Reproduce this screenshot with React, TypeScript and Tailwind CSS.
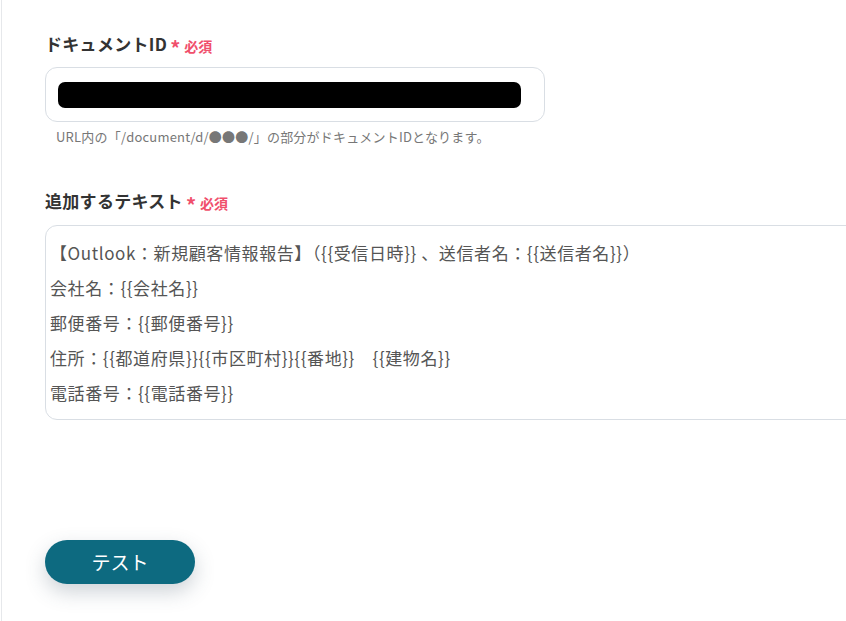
const FONT = { fontFamily: '"Noto Sans CJK JP", "Noto Sans", sans-serif' };

const LINES = [
  '【Outlook：新規顧客情報報告】（{{受信日時}} 、送信者名：{{送信者名}}）',
  '会社名：{{会社名}}',
  '郵便番号：{{郵便番号}}',
  '住所：{{都道府県}}{{市区町村}}{{番地}}　{{建物名}}',
  '電話番号：{{電話番号}}',
];

function Label({ text }: { text: string }) {
  return (
    <div className="flex items-end">
      <span className="text-[17px] font-bold leading-[24px] tracking-[0.3px] text-[#333]">{text}</span>
      <span className="relative top-[3px] ml-[3px] text-[20px] font-bold leading-[22px] text-[#f04f6c]">*</span>
      <span className="ml-[4px] text-[14px] font-bold leading-[20px] text-[#f04f6c]">必須</span>
    </div>
  );
}

export default function App() {
  return (
    <div className="h-[621px] w-[846px] overflow-hidden bg-white" style={FONT}>
      <div className="ml-px h-full border-l border-[#e6e8eb] pl-[43px] pt-[32px]">
        <Label text="ドキュメントID" />
        <div className="mt-[11px] flex h-[55px] w-[500px] items-center rounded-[12px] border border-[#d9dee4] px-[12px]">
          <div className="h-[26px] w-[463px] rounded-[7px] bg-black" />
        </div>
        <p className="mt-[6px] pl-[11px] text-[13px] leading-[18px] tracking-[0.2px] text-[#777]">
          URL内の「/document/d/●●●/」の部分がドキュメントIDとなります。
        </p>
        <div className="mt-[43px]">
          <Label text="追加するテキスト" />
        </div>
        <div className="mt-[12px] w-[830px] rounded-[12px] border border-[#d9dee4] px-[4px] py-[9px]">
          {LINES.map(l => (
            <div key={l} className="text-[17px] leading-[35px] tracking-[0.6px] whitespace-nowrap text-[#555]">{l}</div>
          ))}
        </div>
        <button className="mt-[120px] flex h-[44px] w-[150px] items-center justify-center rounded-full bg-[#0d6a80] text-[19px] text-white shadow-[0_8px_20px_rgba(60,80,100,0.25)]">
          テスト
        </button>
      </div>
    </div>
  );
}
